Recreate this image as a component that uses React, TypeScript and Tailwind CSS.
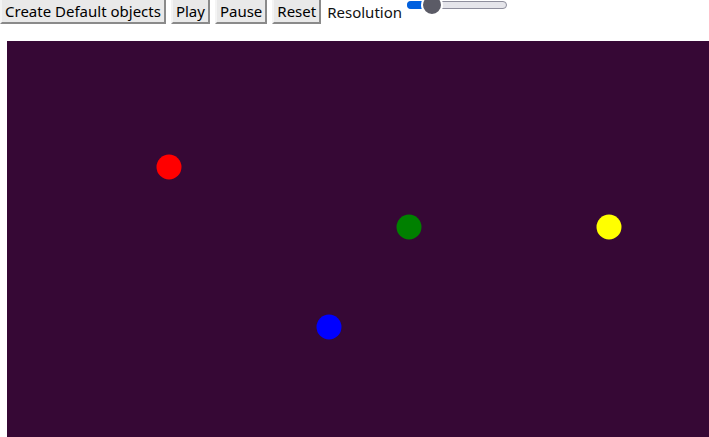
import React from 'react';

const balls = [
  { id: 'red', x: 162, y: 126, color: '#ff0000' },
  { id: 'green', x: 402, y: 186, color: '#008000' },
  { id: 'yellow', x: 602, y: 186, color: '#ffff00' },
  { id: 'blue', x: 322, y: 286, color: '#0000ff' },
];

const ToolButton: React.FC<{ label: string }> = ({ label }) => (
  <button className="h-[26px] px-[3px] bg-[#e9e9e9] text-black text-[15px] leading-none border-2 border-t-[#f4f4f4] border-l-[#f4f4f4] border-b-[#8a8a8a] border-r-[#8a8a8a]">
    {label}
  </button>
);

export default function App() {
  return (
    <div className="w-screen h-screen overflow-hidden bg-white font-['Noto_Sans',sans-serif]">
      <div className="flex items-center gap-[5px] mt-[-2px] h-[26px]">
        <ToolButton label="Create Default objects" />
        <ToolButton label="Play" />
        <ToolButton label="Pause" />
        <ToolButton label="Reset" />
        <span className="text-[15px] text-[#111] leading-none mt-[2px] ml-[1px]">Resolution</span>
        {/* slider */}
        <div className="relative w-[100px] h-[8px] mt-[-12px]">
          <div className="absolute inset-0 rounded-full bg-[#e5e5ea] border border-[#8f8f9d]" />
          <div className="absolute left-0 top-0 h-full w-[24px] rounded-full bg-[#0060df]" />
          <div className="absolute left-[14px] top-[-7px] w-[22px] h-[22px] rounded-full bg-[#5b5b66] border-2 border-white" />
        </div>
      </div>
      <div className="ml-[7px] mt-[17px] w-[800px] h-[450px] bg-[#360835]">
        <svg width="800" height="450">
          {balls.map(b => (
            <circle key={b.id} cx={b.x} cy={b.y} r={12.5} fill={b.color} />
          ))}
        </svg>
      </div>
    </div>
  );
}
